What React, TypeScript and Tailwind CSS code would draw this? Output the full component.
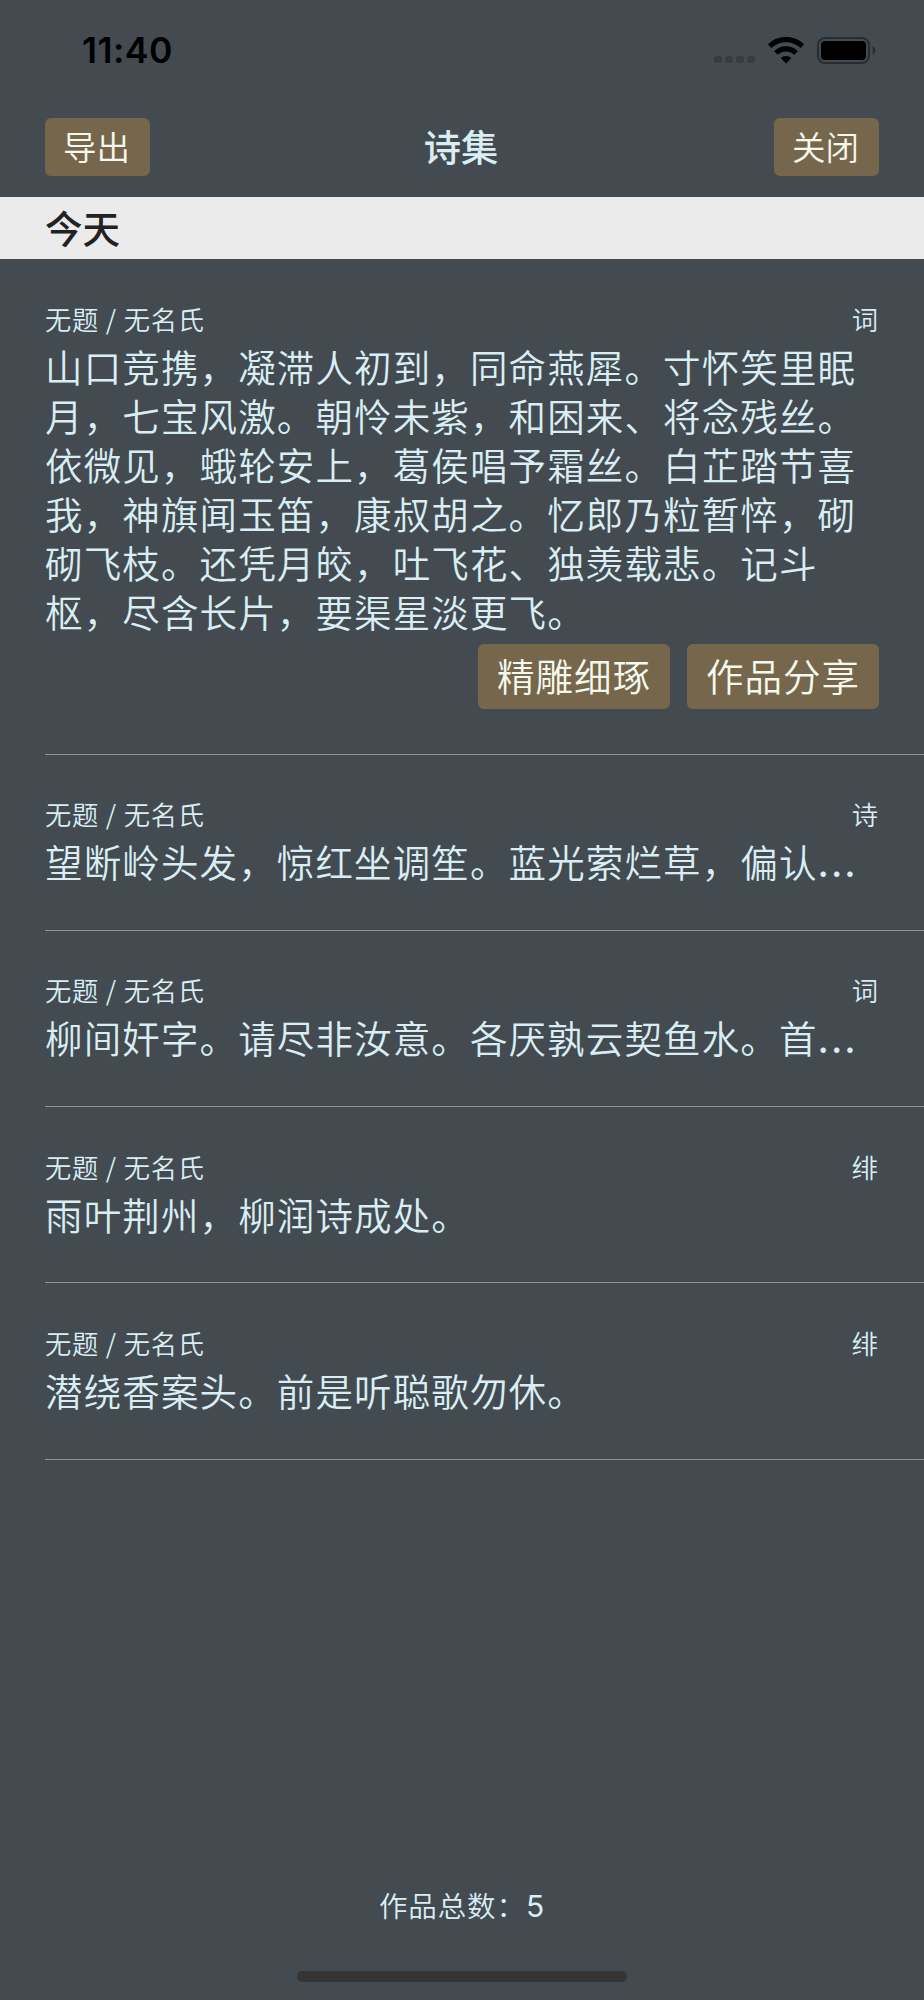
import React, { useState } from 'react';
import clsx from 'clsx';

interface Poem {
  id: number;
  title: string;
  author: string;
  kind: string;
  text: string;
  truncated?: boolean;
}

const POEMS: Poem[] = [
  {
    id: 1,
    title: '无题',
    author: '无名氏',
    kind: '词',
    text: '山口竞携，凝滞人初到，同命燕犀。寸怀笑里眠月，七宝风激。朝怜未紫，和困来、将念残丝。依微见，蛾轮安上，葛侯唱予霜丝。白芷踏节喜我，神旗闻玉笛，康叔胡之。忆郎乃粒暂悴，砌砌飞枝。还凭月皎，吐飞花、独羡载悲。记斗枢，尽含长片，要渠星淡更飞。',
  },
  { id: 2, title: '无题', author: '无名氏', kind: '诗', text: '望断岭头发，惊红坐调笙。蓝光萦烂草，偏认', truncated: true },
  { id: 3, title: '无题', author: '无名氏', kind: '词', text: '柳间奸字。请尽非汝意。各厌孰云契鱼水。首', truncated: true },
  { id: 4, title: '无题', author: '无名氏', kind: '绯', text: '雨叶荆州，柳润诗成处。' },
  { id: 5, title: '无题', author: '无名氏', kind: '绯', text: '潜绕香案头。前是听聪歌勿休。' },
];

const StatusBar = () => (
  <div className="flex h-[101px] items-center justify-between pl-[82px] pr-[48px] text-black">
    <span className="font-['Inter',sans-serif] text-[35.5px] font-semibold leading-none tracking-[0.5px]">11:40</span>
    <div className="flex items-center">
      <div className="mt-[18px] flex gap-[3px]">
        {[0, 1, 2, 3].map((i) => (
          <span key={i} className="h-[7px] w-2 rounded-[2.5px] bg-[#363d40]" />
        ))}
      </div>
      <svg className="ml-[13px]" width="36" height="27" viewBox="0 0 36 27" fill="none" stroke="#000">
        <path d="M1.6 9.2 A23.5 23.5 0 0 1 34.4 9.2" strokeWidth="5.2" />
        <path d="M8 16 A14.3 14.3 0 0 1 28 16" strokeWidth="5.2" />
        <path d="M18 26.5 L12.7 21.1 A7.6 7.6 0 0 1 23.3 21.1 Z" fill="#000" stroke="none" />
      </svg>
      <svg className="ml-[13px]" width="59" height="27" viewBox="0 0 59 27">
        <rect x="1" y="1" width="51" height="25" rx="7" fill="none" stroke="#292d31" strokeWidth="2" />
        <rect x="4" y="4" width="45" height="19" rx="4" fill="#000" />
        <path d="M55.6 9 A5 5 0 0 1 55.6 18 Z" fill="#292d31" />
      </svg>
    </div>
  </div>
);

const HeaderButton: React.FC<{ label: string }> = ({ label }) => (
  <button
    type="button"
    className="h-[58px] w-[105px] rounded-[6px] bg-[#76664c] pb-[2px] pr-[2px] text-[33.5px] font-[350] leading-[56px] text-[#f4f9ee]"
  >
    {label}
  </button>
);

const ActionButton: React.FC<{ label: string }> = ({ label }) => (
  <button
    type="button"
    className="h-[65px] w-[192px] rounded-[6px] bg-[#76664c] pb-[3px] text-[37.5px] font-[350] leading-[62px] tracking-[1px] text-[#f4f9ee]"
  >
    {label}
  </button>
);

interface PoemRowProps {
  poem: Poem;
  expanded: boolean;
  onSelect: () => void;
}

const PoemRow: React.FC<PoemRowProps> = ({ poem, expanded, onSelect }) => (
  <li className="ml-[45px] border-b border-[#8f9396] pt-[43.5px]" onClick={onSelect}>
    <div className="flex h-[38px] justify-between pr-[46px] text-[26.3px] leading-[31px] tracking-[0.8px]">
      <span>
        {poem.title} / {poem.author}
      </span>
      <span className="tracking-normal">{poem.kind}</span>
    </div>
    <p className="w-[834px] text-[37.5px] leading-[49.1px] tracking-[1.13px]">
      {poem.text}
      {poem.truncated && (
        <span className="font-['Inter',sans-serif] font-medium leading-none tracking-[2px]">...</span>
      )}
    </p>
    <div className={clsx(expanded ? 'flex justify-end gap-[17px] pb-[45px] pr-[45px] pt-[8.5px]' : 'h-[44.7px]')}>
      {expanded && (
        <>
          <ActionButton label="精雕细琢" />
          <ActionButton label="作品分享" />
        </>
      )}
    </div>
  </li>
);

export default function App() {
  const [selected, setSelected] = useState<number>(1);

  return (
    <div className="flex h-[2000px] w-[924px] flex-col bg-[#434a50] font-['Noto_Sans_CJK_SC',sans-serif] font-[350] text-[#d8eef4]">
      <StatusBar />

      {/* Nav bar */}
      <header className="flex h-[95.5px] items-start justify-between px-[45px] pt-[17px]">
        <HeaderButton label="导出" />
        <h1 className="pr-[2px] text-[37.3px] font-medium leading-[56px]">诗集</h1>
        <HeaderButton label="关闭" />
      </header>

      <main className="flex-1">
        <h2 className="h-[62.5px] bg-[#ebebeb] pl-[45px] text-[37.5px] font-medium leading-[59px] text-[#222]">今天</h2>
        <ul>
          {POEMS.map((poem) => (
            <PoemRow
              key={poem.id}
              poem={poem}
              expanded={poem.id === selected}
              onSelect={() => setSelected(poem.id)}
            />
          ))}
        </ul>
      </main>

      <footer className="flex flex-col items-center">
        <p className="text-[28.5px] leading-[40px] tracking-[0.9px]">
          作品总数：<span className="font-['Inter',sans-serif] text-[30px] font-normal leading-none">{POEMS.length}</span>
        </p>
        <div className="mb-[18px] mt-[46px] h-[11px] w-[330px] rounded-full bg-[#353535]" />
      </footer>
    </div>
  );
}
